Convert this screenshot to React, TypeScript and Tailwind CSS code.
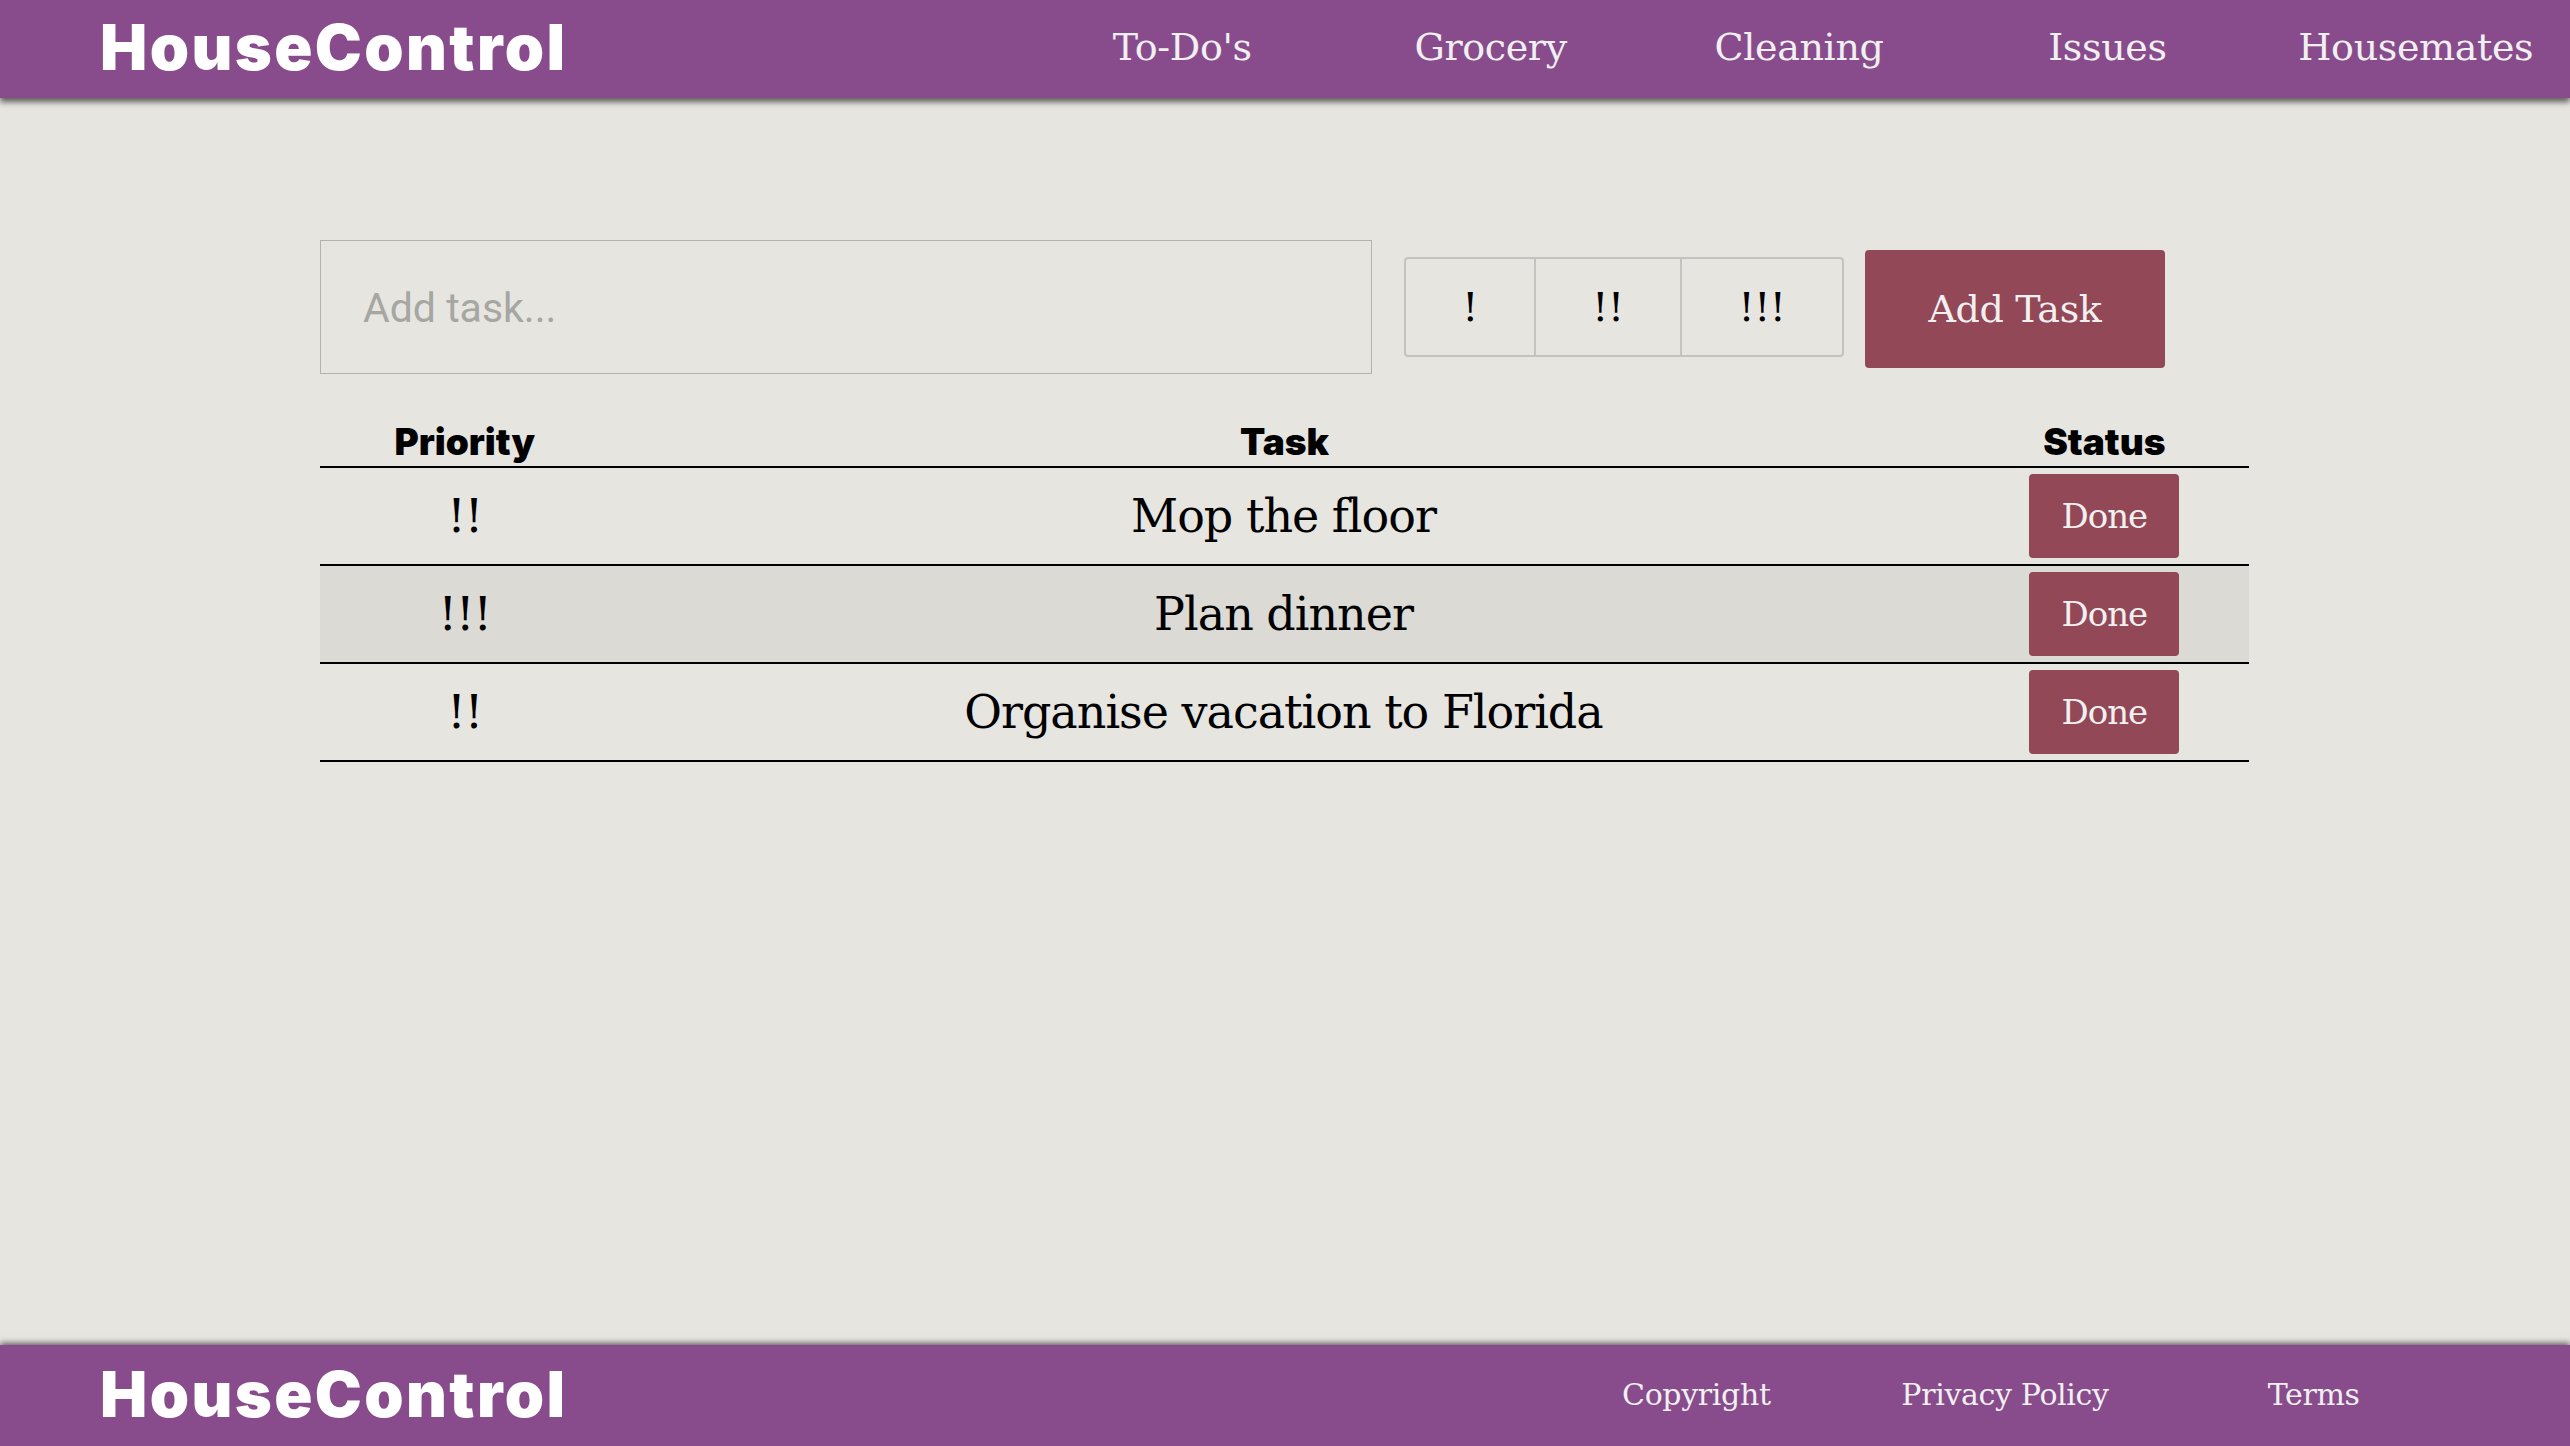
const rows = [
  { priority: "!!", task: "Mop the floor" },
  { priority: "!!!", task: "Plan dinner" },
  { priority: "!!", task: "Organise vacation to Florida" },
];

const serif = "font-['DejaVu_Serif',serif] tracking-[-0.022em]";
const heavy = "font-['Inter',sans-serif] font-black";

const Logo = () => <div className={`${heavy} text-[63px] leading-none text-white tracking-[2.4px]`}>HouseControl</div>;

const App = () => {
  return (
    <div className={`flex h-screen flex-col overflow-hidden bg-[#e6e5e0] ${serif}`}>
      <header className="z-10 flex h-[98px] shrink-0 items-center bg-[#884c8c] pb-1 shadow-[0_4px_6px_rgba(0,0,0,0.6)]">
        <div className="w-2/5 pl-[100px]">
          <Logo />
        </div>
        <nav className="grid w-3/5 grid-cols-5 text-center text-[38px] text-[#f0f0f0]">
          <a>To-Do's</a>
          <a>Grocery</a>
          <a>Cleaning</a>
          <a>Issues</a>
          <a>Housemates</a>
        </nav>
      </header>

      <main className="flex-1 pl-[320px] pt-[142px]">
        <div className="flex items-center gap-[32px]">
          <input
            placeholder="Add task..."
            className="h-[134px] w-[1052px] border border-[#b3b2ad] bg-transparent pl-[42px] pt-0.5 font-['Roboto',sans-serif] text-[41px] tracking-normal outline-none placeholder:text-[#a6a6a2]"
          />
          <div className="flex h-[100px] w-[440px] text-[40px] text-black">
            <button className="w-[132px] rounded-l border-2 border-[#c4c3bf]">!</button>
            <button className="-ml-0.5 w-[148px] border-2 border-[#c4c3bf]">!!</button>
            <button className="-ml-0.5 w-[164px] rounded-r border-2 border-[#c4c3bf]">!!!</button>
          </div>
          <button className="-ml-[11px] mt-1 h-[118px] w-[300px] rounded bg-[#934857] text-[38px] text-[#f0f0f0]">Add Task</button>
        </div>

        <table className="mt-[37px] w-[1929px] table-fixed border-collapse text-center tracking-normal text-black">
          <thead>
            <tr className={`h-[56px] border-b-2 border-black ${heavy} text-[37px] leading-none`}>
              <th className="w-[15%] pt-1.5 font-black">Priority</th>
              <th className="w-[70%] pt-1.5 font-black">Task</th>
              <th className="w-[15%] pt-1.5 font-black">Status</th>
            </tr>
          </thead>
          <tbody className="text-[46px] tracking-[-0.022em]">
            {rows.map((row, i) => (
              <tr key={row.task} className={`h-[98px] border-b-2 border-black ${i === 1 ? "bg-[#dbdad5]" : ""}`}>
                <td>{row.priority}</td>
                <td className="pr-0.5">{row.task}</td>
                <td>
                  <button className="h-[84px] w-[150px] rounded bg-[#934857] align-middle text-[34px] text-[#f0f0f0]">Done</button>
                </td>
              </tr>
            ))}
          </tbody>
        </table>
      </main>

      <footer className="z-10 flex h-[101px] shrink-0 items-center bg-[#884c8c] pb-0.5 shadow-[0_-2px_6px_rgba(0,0,0,0.6)]">
        <div className="w-3/5 pl-[100px]">
          <Logo />
        </div>
        <nav className="grid w-[926px] grid-cols-3 text-center text-[30px] text-[#f0f0f0]">
          <a>Copyright</a>
          <a>Privacy Policy</a>
          <a>Terms</a>
        </nav>
      </footer>
    </div>
  );
};

export default App;
